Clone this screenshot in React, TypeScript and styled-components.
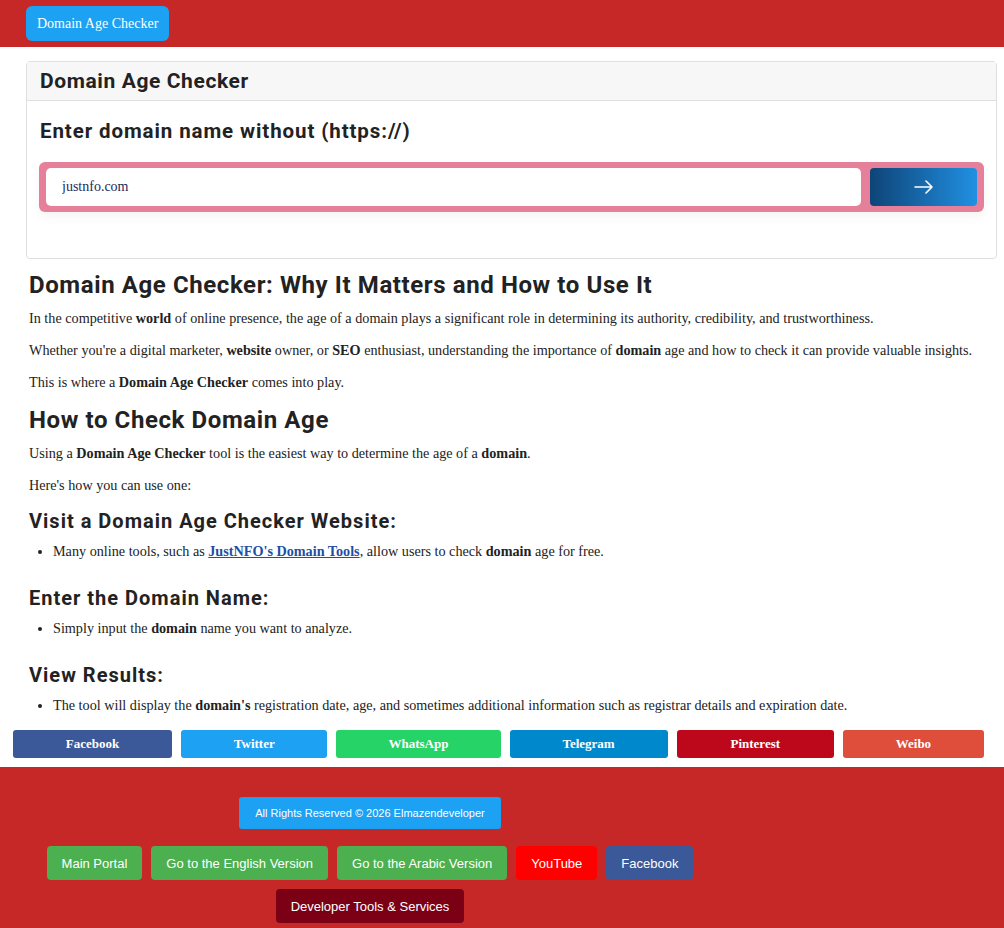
import styled, { createGlobalStyle } from "styled-components";

const GlobalStyle = createGlobalStyle`
  body {
    margin: 0;
    background: #ffffff;
    font-family: "Liberation Serif", serif;
    color: #222;
  }
`;

const TopBar = styled.header`
  background-color: #c62828;
  height: 47px;
  padding: 6px 26px 0;
  box-sizing: border-box;
`;

const BrandButton = styled.a`
  display: inline-flex;
  align-items: center;
  height: 35px;
  padding: 0 11px;
  background-color: #1da1f2;
  color: white;
  border-radius: 6px;
  font-family: "Liberation Serif", serif;
  font-size: 14px;
  text-decoration: none;
`;

const Card = styled.div`
  margin: 14px 7px 0 26px;
  border: 1px solid #dfdfdf;
  border-radius: 4px;
  background: #fff;
`;

const CardHeader = styled.div`
  background-color: #f7f7f7;
  border-bottom: 1px solid #dfdfdf;
  height: 38px;
  display: flex;
  align-items: center;
  padding: 0 13px;
`;

const CardTitle = styled.h1`
  margin: 0;
  font-family: Roboto, sans-serif;
  font-size: 21px;
  font-weight: 700;
  color: #222;
  letter-spacing: 0.6px;
`;

const CardBody = styled.div`
  padding: 18px 12px 46px;
`;

const Prompt = styled.h4`
  margin: 0 0 19px;
  padding-left: 1px;
  font-family: Roboto, sans-serif;
  font-size: 20.5px;
  font-weight: 700;
  color: #222;
  letter-spacing: 0.9px;
`;

const InputGroup = styled.form`
  display: flex;
  gap: 9px;
  background-color: #e57f9a;
  border-radius: 6px;
  padding: 6px 7px;
  box-shadow: 0 6px 10px rgba(0, 0, 0, 0.04);
`;

const DomainInput = styled.input`
  flex: 1;
  height: 38px;
  border: none;
  border-radius: 5px;
  padding: 0 16px;
  font-family: "Liberation Serif", serif;
  font-size: 14px;
  color: #1a2a5a;
  outline: none;
`;

const GoButton = styled.button`
  width: 107px;
  height: 38px;
  border: none;
  border-radius: 4px;
  background: linear-gradient(90deg, #0e4477, #2190e2);
  display: flex;
  align-items: center;
  justify-content: center;
  cursor: pointer;
`;

const Article = styled.article`
  padding: 12px 16px 0 29px;
`;

const H2 = styled.h2`
  margin: 0 0 10px;
  font-family: Roboto, sans-serif;
  font-size: 24px;
  line-height: 29px;
  font-weight: 700;
  color: #222;
  letter-spacing: 0.6px;
`;

const H3 = styled.h3`
  margin: 0;
  font-family: Roboto, sans-serif;
  font-size: 20px;
  line-height: 24px;
  font-weight: 700;
  color: #222;
  letter-spacing: 1px;
`;

const P = styled.p`
  margin: 0 0 16px;
  font-family: "Liberation Serif", serif;
  font-size: 14.2px;
  line-height: 16px;
`;

const List = styled.ul<{ last?: boolean }>`
  margin: 10px 0 ${(p) => (p.last ? "0" : "27px")};
  padding-left: 24px;
  font-family: "Liberation Serif", serif;
  font-size: 14.2px;
  line-height: 16px;
`;

const TextLink = styled.a`
  color: #1e4fa3;
  font-weight: 700;
  text-decoration: underline;
`;

const ShareBar = styled.div`
  display: flex;
  gap: 9px;
  margin: 17px 20px 9px 13px;
`;

const ShareButton = styled.a<{ bg: string; w: number }>`
  flex: ${(p) => p.w} 1 0;
  height: 28px;
  display: flex;
  align-items: center;
  justify-content: center;
  background-color: ${(p) => p.bg};
  color: white;
  border-radius: 3px;
  font-family: "Liberation Serif", serif;
  font-weight: 700;
  font-size: 13px;
  text-decoration: none;
`;

const Footer = styled.footer`
  background-color: #c62828;
  padding: 30px 264px 6px 0;
  display: flex;
  flex-direction: column;
  align-items: center;
  gap: 9px;
`;

const FooterRow = styled.div`
  display: flex;
  gap: 9px;
  justify-content: center;
`;

const Copyright = styled.div`
  background-color: #1da1f2;
  color: white;
  border-radius: 3px;
  height: 32px;
  padding: 0 16px;
  margin-bottom: 8px;
  display: flex;
  align-items: center;
  font-family: "Liberation Sans", Arial, sans-serif;
  font-size: 11px;
`;

const FooterButton = styled.a<{ bg: string }>`
  background-color: ${(p) => p.bg};
  color: white;
  border-radius: 4px;
  height: 34px;
  padding: 0 15px;
  display: flex;
  align-items: center;
  font-family: "Liberation Sans", Arial, sans-serif;
  font-size: 13px;
  text-decoration: none;
`;

const shares = [
  { name: "Facebook", bg: "#3b5998", w: 159 },
  { name: "Twitter", bg: "#1da1f2", w: 146 },
  { name: "WhatsApp", bg: "#25d366", w: 164 },
  { name: "Telegram", bg: "#0088cc", w: 158 },
  { name: "Pinterest", bg: "#bd081c", w: 157 },
  { name: "Weibo", bg: "#df4d3b", w: 141 },
];

const links = [
  { name: "Main Portal", bg: "#4caf50" },
  { name: "Go to the English Version", bg: "#4caf50" },
  { name: "Go to the Arabic Version", bg: "#4caf50" },
  { name: "YouTube", bg: "#ff0000" },
  { name: "Facebook", bg: "#3b5998" },
];

const App = () => {
  return (
    <>
      <GlobalStyle />
      <TopBar>
        <BrandButton href="#">Domain Age Checker</BrandButton>
      </TopBar>

      <Card>
        <CardHeader>
          <CardTitle>Domain Age Checker</CardTitle>
        </CardHeader>
        <CardBody>
          <Prompt>Enter domain name without (https://)</Prompt>
          <InputGroup onSubmit={(e) => e.preventDefault()}>
            <DomainInput defaultValue="justnfo.com" />
            <GoButton type="submit" aria-label="Check">
              <svg width="20" height="14" viewBox="0 0 20 14" fill="none">
                <path
                  d="M1 7h17M12 1l6 6-6 6"
                  stroke="white"
                  strokeWidth="1.6"
                  strokeLinecap="round"
                  strokeLinejoin="round"
                />
              </svg>
            </GoButton>
          </InputGroup>
        </CardBody>
      </Card>

      <Article>
        <H2>Domain Age Checker: Why It Matters and How to Use It</H2>
        <P>
          In the competitive <b>world</b> of online presence, the age of a
          domain plays a significant role in determining its authority,
          credibility, and trustworthiness.
        </P>
        <P>
          Whether you're a digital marketer, <b>website</b> owner, or{" "}
          <b>SEO</b> enthusiast, understanding the importance of{" "}
          <b>domain</b> age and how to check it can provide valuable insights.
        </P>
        <P>
          This is where a <b>Domain Age Checker</b> comes into play.
        </P>

        <H2>How to Check Domain Age</H2>
        <P>
          Using a <b>Domain Age Checker</b> tool is the easiest way to
          determine the age of a <b>domain</b>.
        </P>
        <P>Here's how you can use one:</P>

        <H3>Visit a Domain Age Checker Website:</H3>
        <List>
          <li>
            Many online tools, such as{" "}
            <TextLink href="#">JustNFO's Domain Tools</TextLink>, allow users
            to check <b>domain</b> age for free.
          </li>
        </List>

        <H3>Enter the Domain Name:</H3>
        <List>
          <li>
            Simply input the <b>domain</b> name you want to analyze.
          </li>
        </List>

        <H3>View Results:</H3>
        <List last>
          <li>
            The tool will display the <b>domain's</b> registration date, age,
            and sometimes additional information such as registrar details and
            expiration date.
          </li>
        </List>
      </Article>

      <ShareBar>
        {shares.map((s) => (
          <ShareButton key={s.name} bg={s.bg} w={s.w} href="#">
            {s.name}
          </ShareButton>
        ))}
      </ShareBar>

      <Footer>
        <Copyright>All Rights Reserved © 2026 Elmazendeveloper</Copyright>
        <FooterRow>
          {links.map((l) => (
            <FooterButton key={l.name} bg={l.bg} href="#">
              {l.name}
            </FooterButton>
          ))}
        </FooterRow>
        <FooterRow>
          <FooterButton bg="#7b0016" href="#">
            Developer Tools &amp; Services
          </FooterButton>
        </FooterRow>
      </Footer>
    </>
  );
};

export default App;
